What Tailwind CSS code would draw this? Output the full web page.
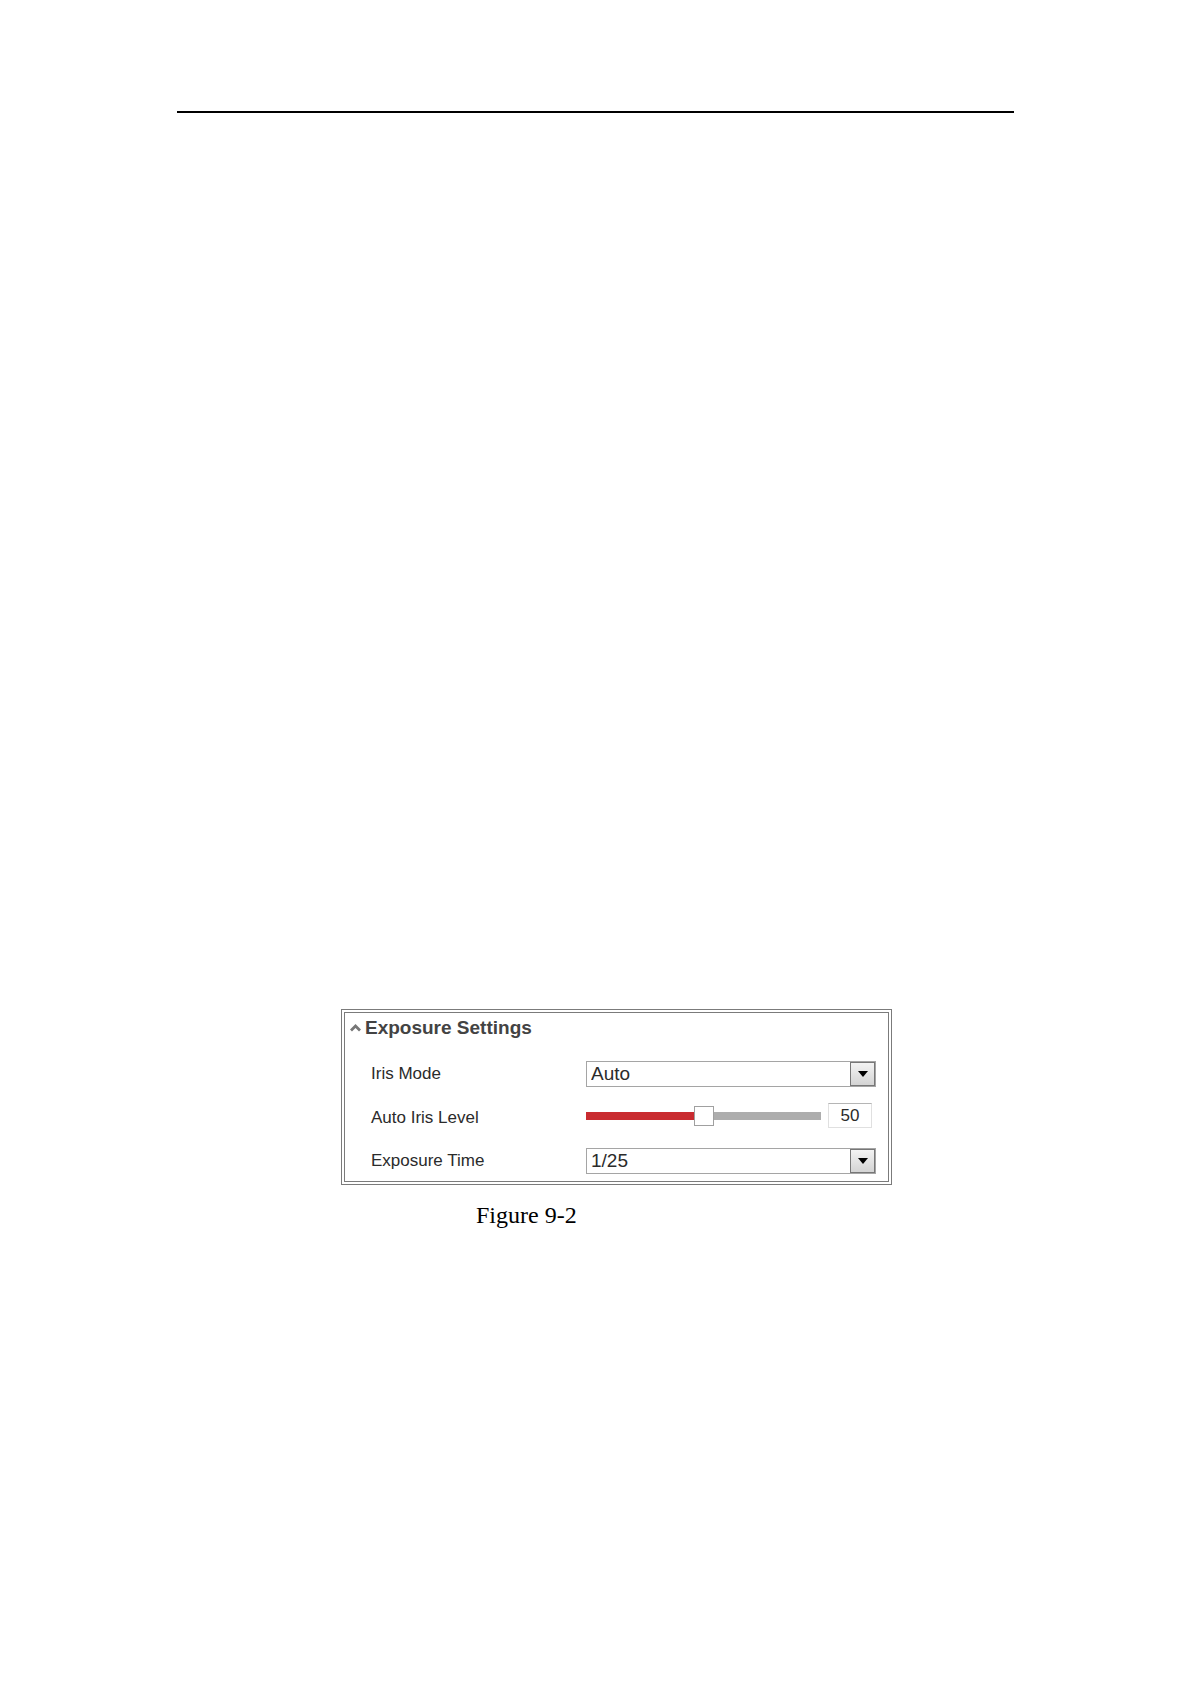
<!DOCTYPE html>
<html lang="en">

<head>
  <meta charset="UTF-8">
  <meta name="viewport" content="width=device-width, initial-scale=1.0">
  <title>Exposure Settings</title>
  <script src="https://cdn.jsdelivr.net/npm/@tailwindcss/browser@4"></script>
</head>

<body class="bg-white min-h-screen px-4">
  <div class="max-w-[837px] mx-auto pt-[111px] pb-16">
    <header class="border-t-2 border-black"></header>

    <main class="pt-[896px] pl-[42px]">
      <figure class="max-w-[551px] mx-auto">
        <section class="border-4 border-double border-[#7b7b7b] pl-[5px] pr-3 pt-[3px] pb-[7px] font-['Liberation_Sans',Arial,sans-serif] text-[17px] text-[#2b2b2b]">
          <h2>
            <button type="button" class="flex items-center gap-1 text-[19px] leading-6 font-bold text-[#434343]">
              <svg class="w-[11px] h-[11px]" viewBox="0 0 11 11" fill="none" stroke="#777" stroke-width="2.8" aria-hidden="true">
                <path d="M1 7.5 L5.5 3 L10 7.5" />
              </svg>
              Exposure Settings
            </button>
          </h2>

          <div class="grid grid-cols-[1fr_290px] gap-y-[18px] pt-[21px] pl-[21px]">
            <label for="irisMode" class="leading-[26px]">Iris Mode</label>
            <div class="relative">
              <select id="irisMode" class="appearance-none block w-full h-[26px] border-1 border-[#a5a5a5] bg-white pl-1 pr-7 text-[19px] leading-6">
                <option>Auto</option>
                <option>Manual</option>
              </select>
              <span class="absolute right-px top-px w-[25px] h-6 border-1 border-[#777] bg-linear-to-b from-[#f3f3f3] to-[#d4d4d4] flex items-center justify-center pointer-events-none">
                <svg class="w-[10px] h-[6px]" viewBox="0 0 10 6" aria-hidden="true">
                  <path d="M0 0 H10 L5 6 Z" fill="#000" />
                </svg>
              </span>
            </div>

            <label for="irisLevel" class="leading-[25px]">Auto Iris Level</label>
            <div class="flex items-center gap-[7px] h-[21px]">
              <input id="irisLevel" type="range" min="0" max="100" value="50"
                class="appearance-none w-[235px] h-2 bg-linear-to-r from-[#c92b30] from-50% to-[#adadad] to-50% [&::-webkit-slider-thumb]:appearance-none [&::-webkit-slider-thumb]:w-5 [&::-webkit-slider-thumb]:h-5 [&::-webkit-slider-thumb]:bg-white [&::-webkit-slider-thumb]:border-1 [&::-webkit-slider-thumb]:border-[#a0a0a0]">
              <input id="irisValue" type="text" value="50" aria-label="Auto Iris Level value"
                class="w-11 h-[25px] shrink-0 border-1 border-[#e0e0e0] border-t-[#b5b5b5] text-center">
            </div>

            <label for="exposureTime" class="leading-[26px]">Exposure Time</label>
            <div class="relative">
              <select id="exposureTime" class="appearance-none block w-full h-[26px] border-1 border-[#a5a5a5] bg-white pl-1 pr-7 text-[19px] leading-6">
                <option>1/25</option>
                <option>1/50</option>
                <option>1/100</option>
              </select>
              <span class="absolute right-px top-px w-[25px] h-6 border-1 border-[#777] bg-linear-to-b from-[#f3f3f3] to-[#d4d4d4] flex items-center justify-center pointer-events-none">
                <svg class="w-[10px] h-[6px]" viewBox="0 0 10 6" aria-hidden="true">
                  <path d="M0 0 H10 L5 6 Z" fill="#000" />
                </svg>
              </span>
            </div>
          </div>
        </section>

        <figcaption class="mt-[14px] pl-[135px] font-['Liberation_Serif','Times_New_Roman',serif] text-2xl text-black">Figure 9-2</figcaption>
      </figure>
    </main>
  </div>

  <script>
    const level = document.getElementById('irisLevel');
    const value = document.getElementById('irisValue');

    // keep the slider, its filled part and the number box in step
    function setLevel(n) {
      level.value = n;
      value.value = level.value;
      level.style.backgroundImage = `linear-gradient(to right, #c92b30 ${level.value}%, #adadad ${level.value}%)`;
    }

    level.addEventListener('input', () => setLevel(level.value));
    value.addEventListener('change', () => setLevel(value.value));
  </script>
</body>

</html>
